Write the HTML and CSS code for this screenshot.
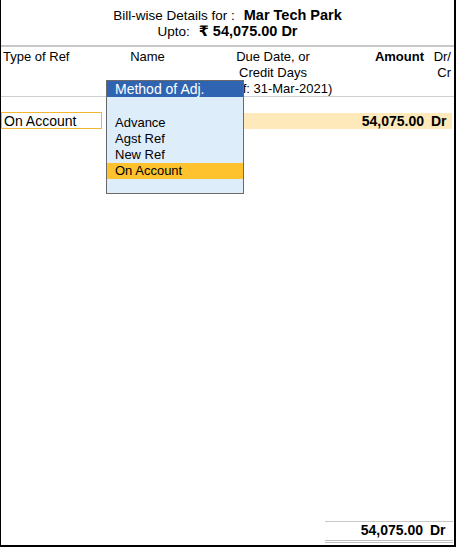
FILE: index.html
```html
<!DOCTYPE html>
<html>
<head>
<meta charset="utf-8">
<link rel="stylesheet" href="styles.css">
</head>
<body>
<div class="screen">
  <header class="title">
    <div class="title-line">Bill-wise Details for :<b class="gap">Mar Tech Park</b></div>
    <div class="title-line">Upto:<b class="gap">₹ 54,075.00 Dr</b></div>
  </header>

  <div class="cols grid">
    <div class="c-type">Type of Ref</div>
    <div class="c-name">Name</div>
    <div class="c-due">Due Date, or<br>Credit Days<br>(as of: 31-Mar-2021)</div>
    <div class="c-amt"><b>Amount</b></div>
    <div class="c-drcr">Dr/<br>Cr</div>
  </div>

  <div class="entries">
    <div class="entry grid">
      <div class="c-type"><div class="input">On Account</div></div>
      <div class="hl"></div>
      <div class="hl"></div>
      <div class="hl c-amt num"><b>54,075.00</b></div>
      <div class="hl c-dr num"><b>Dr</b></div>
    </div>
  </div>

  <div class="spacer"></div>

  <div class="total grid">
    <div class="c-amt num"><b>54,075.00</b></div>
    <div class="c-dr num"><b>Dr</b></div>
  </div>

  <div class="popup">
    <div class="popup-title">Method of Adj.</div>
    <ul class="popup-list">
      <li>Advance</li>
      <li>Agst Ref</li>
      <li>New Ref</li>
      <li class="sel">On Account</li>
    </ul>
  </div>
</div>
</body>
</html>
```

FILE: styles.css
```css
html, body {
  margin: 0;
  padding: 0;
  background: #ffffff;
}

body {
  font-family: "Liberation Sans", Arial, "DejaVu Sans", sans-serif;
  font-size: 13px;
  color: #000;
}

.screen {
  position: relative;
  box-sizing: border-box;
  width: 456px;
  height: 547px;
  border-left: 1px solid #000;
  border-right: 2px solid #000;
  border-bottom: 2px solid #000;
  display: flex;
  flex-direction: column;
  overflow: hidden;
}

.title {
  box-sizing: border-box;
  height: 47px;
  padding-top: 7px;
  text-align: center;
  line-height: 16px;
  font-size: 13.5px;
  border-bottom: 2px solid #c8c8c8;
}

.title-line {
  height: 16px;
}

.title b {
  font-size: 14.5px;
}

.gap {
  margin-left: 9px;
}

.grid {
  display: grid;
  grid-template-columns: 104px 85px 166px 70px 1fr;
}

.cols {
  box-sizing: border-box;
  height: 50px;
  padding-top: 2px;
  line-height: 16px;
  border-bottom: 1px solid #cfcfcf;
}

.c-type {
  padding-left: 2px;
}

.c-name {
  text-align: center;
}

.c-due {
  text-align: center;
  white-space: nowrap;
}

.c-amt {
  text-align: right;
  padding-right: 2px;
}

.c-drcr {
  text-align: right;
  padding-right: 3px;
}

.c-dr {
  padding-left: 5px;
}

.num {
  font-size: 14px;
}

.entries {
  padding-top: 16px;
  padding-right: 2px;
}

.entry {
  height: 16px;
  line-height: 16px;
}

.entry .hl {
  box-sizing: border-box;
  height: 16px;
  padding-top: 1px;
  line-height: 15px;
}

.entry .c-type {
  padding-left: 0;
}

.input {
  box-sizing: border-box;
  width: 101px;
  height: 17px;
  margin-top: -1px;
  padding-top: 1px;
  line-height: 15px;
  padding-left: 2px;
  font-size: 14px;
  border: 1px solid #f3b733;
}

.hl {
  background: #fde9ba;
}

.entry .hl:nth-child(2) {
  margin-left: 1px;
}

.spacer {
  flex: 1;
}

.total {
  box-sizing: border-box;
  margin-left: 324px;
  margin-right: 1px;
  margin-bottom: 2px;
  grid-template-columns: 100px 1fr;
  height: 22px;
  line-height: 17px;
  border-top: 1px solid #c8c8c8;
  border-bottom: 3px double #c0c0c0;
}

.popup {
  position: absolute;
  left: 105px;
  top: 80px;
  width: 138px;
  box-sizing: border-box;
  border: 1px solid #6a6a6a;
  background: #deedfa;
  line-height: 16px;
}

.popup-title {
  background: #2f64b2;
  color: #ffffff;
  padding-left: 8px;
  height: 16px;
  font-size: 14px;
}

.popup-list {
  list-style: none;
  margin: 0;
  padding: 18px 0 14px 0;
}

.popup-list li {
  height: 16px;
  padding-left: 8px;
}

.popup-list li.sel {
  background: #fdc22e;
}
```
